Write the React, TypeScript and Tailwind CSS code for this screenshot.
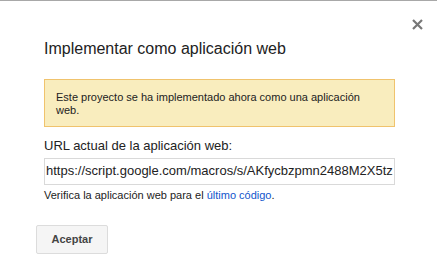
export default function App() {
  return (
    <div className="relative w-[441px] h-[278px] bg-white font-['Liberation_Sans',Arial,sans-serif] text-[#222]">
      <div className="w-[437px] border-t border-[#a8a8a8]" />
      {/* Close button */}
      <button className="absolute right-[18px] top-[18px] w-[12px] h-[12px] flex items-center justify-center">
        <svg width="11" height="11" viewBox="0 0 11 11">
          <path d="M1 1L10 10M10 1L1 10" stroke="#777" strokeWidth="2.2" />
        </svg>
      </button>

      <div className="pl-[44px] pr-[46px] pt-[38px]">
        <h1 className="text-[16px] leading-[20px] text-[#222]">Implementar como aplicación web</h1>

        <div className="mt-[20px] border border-[#f0c36d] bg-[#f9edbe] px-[11px] pt-[11px] pb-[9px] text-[11px] leading-[13px] text-[#222]">
          Este proyecto se ha implementado ahora como una aplicación web.
        </div>

        <div className="mt-[10px] text-[13px] leading-[17px] text-[#222]">URL actual de la aplicación web:</div>
        <div className="mt-[4px] h-[27px] border border-[#d9d9d9] overflow-hidden whitespace-nowrap px-[1px] text-[13px] leading-[24px] text-[#222]">
          https://script.google.com/macros/s/AKfycbzpmn2488M2X5tz
        </div>
        <div className="mt-[3px] text-[11px] leading-[14px] text-[#222]">
          Verifica la aplicación web para el <span className="text-[#15c]">último código</span>.
        </div>
      </div>

      <div className="pl-[36px] mt-[23px]">
        <button className="w-[72px] h-[29px] rounded-[2px] border border-[#dcdcdc] bg-[#f5f5f5] text-[11px] font-bold text-[#444]">
          Aceptar
        </button>
      </div>
    </div>
  );
}
